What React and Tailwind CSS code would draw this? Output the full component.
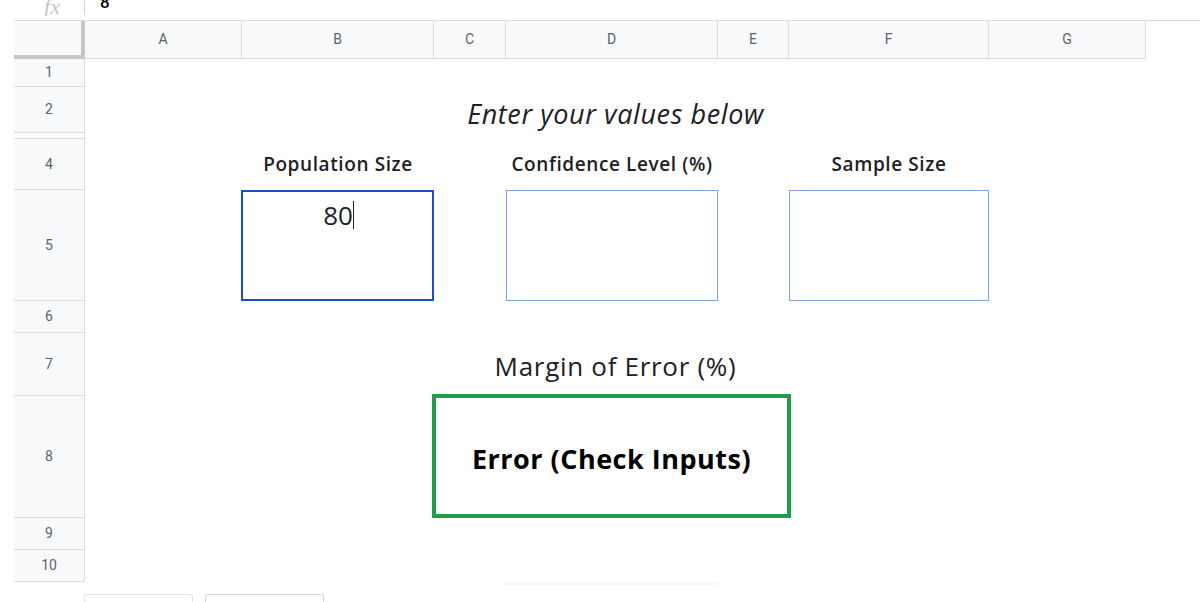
import React from "react";

const rowHeads = [
  { n: "1", row: "row-start-2" },
  { n: "2", row: "row-start-3" },
  { n: "4", row: "row-start-5" },
  { n: "5", row: "row-start-6" },
  { n: "6", row: "row-start-7" },
  { n: "7", row: "row-start-8" },
  { n: "8", row: "row-start-9" },
  { n: "9", row: "row-start-10" },
  { n: "10", row: "row-start-11" },
];

const colHeads = [
  { n: "A", col: "col-start-3" },
  { n: "B", col: "col-start-4" },
  { n: "C", col: "col-start-5" },
  { n: "D", col: "col-start-6" },
  { n: "E", col: "col-start-7" },
  { n: "F", col: "col-start-8" },
  { n: "G", col: "col-start-9" },
];

export default function App() {
  const sans = { fontFamily: "Roboto, 'Liberation Sans', sans-serif" };
  const disp = { fontFamily: "'Open Sans', Roboto, sans-serif" };
  return (
    <div className="w-[1200px] h-[602px] bg-white overflow-hidden flex flex-col" style={sans}>
      {/* formula bar */}
      <div className="h-[21px] ml-[14px] border-b border-[#dadce0] flex items-start overflow-hidden shrink-0">
        <div className="w-[70px] h-[16px] flex justify-center overflow-hidden">
          <span
            className="italic text-[#c4c4c4] text-[22px] leading-none -mt-[4px] pl-[6px]"
            style={{ fontFamily: "'Liberation Serif', serif" }}
          >
            fx
          </span>
        </div>
        <div className="w-px h-[15px] bg-[#d0d0d0]"></div>
        <span className="ml-[15px] text-[17px] font-medium text-black leading-none -mt-[6px]">8</span>
      </div>

      {/* sheet grid */}
      <div className="flex-1 grid grid-cols-[14px_71px_157px_192px_72px_212px_71px_200px_157px_1fr] grid-rows-[38px_28px_46px_6px_51px_111px_32px_63px_122px_32px_32px_1fr]">
        {/* corner */}
        <div className="col-start-2 row-start-1 bg-[#f8f9fa] border-r-4 border-b-4 border-[#c4c7c5]"></div>

        {/* column headers */}
        {colHeads.map((c) => (
          <div
            key={c.n}
            className={`${c.col} row-start-1 bg-[#f8f9fa] border-r border-b border-[#dadce0] flex items-center justify-center text-[14px] text-[#5f6368]`}
          >
            {c.n}
          </div>
        ))}

        {/* row headers */}
        {rowHeads.map((r) => (
          <div
            key={r.n}
            className={`col-start-2 ${r.row} bg-[#f8f9fa] border-r border-b border-[#dadce0] flex items-center justify-center text-[14px] text-[#5f6368]`}
          >
            {r.n}
          </div>
        ))}
        {/* hidden row 3 */}
        <div className="col-start-2 row-start-4 bg-white border-r border-b border-[#dadce0]"></div>

        {/* title */}
        <div className="col-start-4 col-end-9 row-start-3 flex items-center justify-center pt-[8px]" style={disp}>
          <span className="italic text-[27px] tracking-[0.6px] text-[#202124]">Enter your values below</span>
        </div>

        {/* labels */}
        <div className="col-start-4 row-start-5 flex items-center justify-center" style={disp}>
          <span className="text-[19px] tracking-[0.6px] font-semibold text-[#202124]">Population Size</span>
        </div>
        <div className="col-start-6 row-start-5 flex items-center justify-center" style={disp}>
          <span className="text-[19px] tracking-[0.6px] font-semibold text-[#202124]">Confidence Level (%)</span>
        </div>
        <div className="col-start-8 row-start-5 flex items-center justify-center" style={disp}>
          <span className="text-[19px] tracking-[0.6px] font-semibold text-[#202124]">Sample Size</span>
        </div>

        {/* input boxes */}
        <div className="col-start-4 row-start-6 -ml-px border-2 border-[#1a4fc4] flex items-start justify-center" style={disp}>
          <span className="text-[26px] text-[#202124] mt-[8px] leading-[30px] flex items-center pl-[2px]">
            80
            <span className="inline-block w-px h-[28px] bg-[#202124]"></span>
          </span>
        </div>
        <div className="col-start-6 row-start-6 border-[1.5px] border-[#7fa1e6]"></div>
        <div className="col-start-8 row-start-6 border-[1.5px] border-[#7fa1e6]"></div>

        {/* margin of error */}
        <div className="col-start-4 col-end-9 row-start-8 flex items-center justify-center pt-[4px]" style={disp}>
          <span className="text-[26px] tracking-[0.7px] text-[#202124]">Margin of Error (%)</span>
        </div>

        {/* result box */}
        <div className="col-start-5 col-end-8 row-start-9 -mt-[2px] -mx-[2px] border-4 border-[#1f9d49] flex items-center justify-center pt-[6px]" style={disp}>
          <span className="text-[27px] tracking-[0.5px] font-bold text-black">Error (Check Inputs)</span>
        </div>

        {/* faint scrollbar */}
        <div className="col-start-6 row-start-12 h-[3px] -ml-px bg-[#f6f6f6]"></div>

        {/* bottom tabs */}
        <div className="col-start-2 col-end-6 row-start-12 flex items-end pl-[70px] gap-[12px]">
          <div className="w-[109px] h-[8px] border border-b-0 border-[#e3e3e3] rounded-t-[3px]"></div>
          <div className="w-[119px] h-[8px] border border-b-0 border-[#d6d6d6] rounded-t-[3px]"></div>
        </div>
      </div>
    </div>
  );
}
